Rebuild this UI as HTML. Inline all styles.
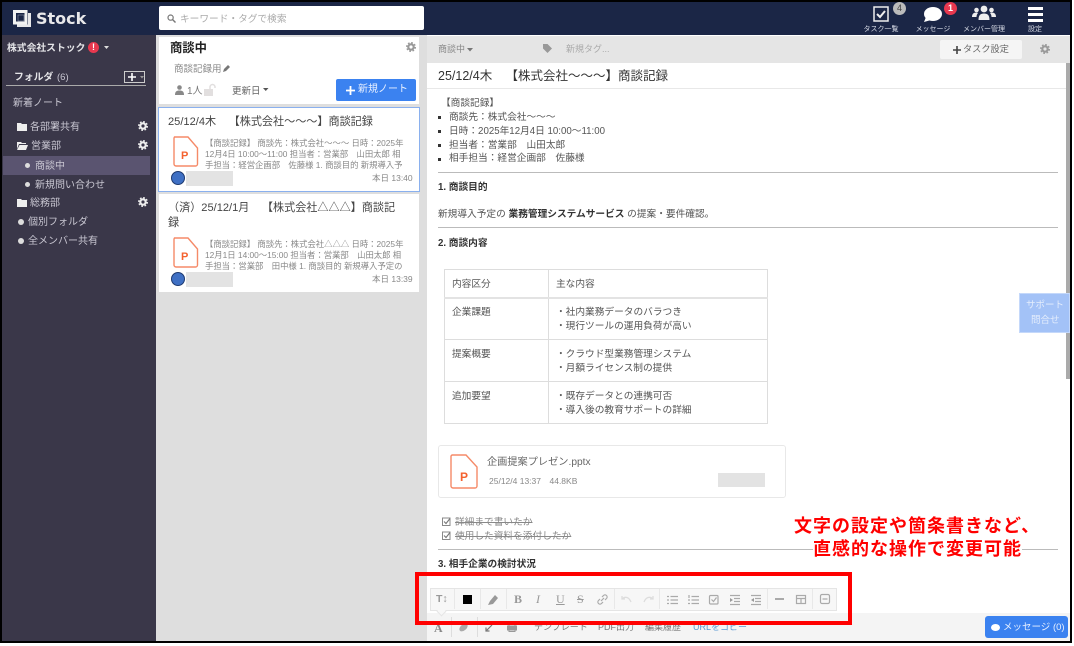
<!DOCTYPE html>
<html lang="ja"><head><meta charset="utf-8">
<style>
html,body{margin:0;padding:0;background:#fff}
body{width:1074px;height:646px;overflow:hidden;position:relative;font-family:"Liberation Sans","Noto Sans CJK JP",sans-serif;color:#444;filter:blur(.3px)}
.a,.t{position:absolute}
.t{white-space:nowrap;line-height:1.2;margin-top:2px}
svg{position:absolute;overflow:visible}
.s{color:#c9c7d2;font-size:10px}
.hl{position:absolute;left:438px;width:620px;height:1px;background:#bbb}
.hi{color:#d5d9e4;font-size:7px;transform:translateX(-50%)}
.pv{color:#888;font-size:8.35px}
.c{font-size:9.7px;color:#555}
.tb{stroke:#aaa;fill:none;stroke-width:1.2}
.gap{padding-left:7px}
</style></head><body>
<svg width="0" height="0" style="left:0;top:0"><defs><symbol id="g" viewBox="0 0 12 12"><circle cx="6" cy="6" r="3.2" fill="none" stroke="currentColor" stroke-width="2.600"/><circle cx="6" cy="6" r="5" fill="none" stroke="currentColor" stroke-width="2" stroke-dasharray="2 1.930"/></symbol></defs></svg>
<div class="a" style="left:0;top:0;width:1072px;height:643px;background:#000"></div>
<div class="a" style="left:2px;top:2px;width:1068px;height:639px;background:#fff;overflow:hidden"></div>
<!-- header -->
<div class="a" style="left:2px;top:2px;width:1068px;height:33px;background:#1b2646"></div>
<!-- sidebar -->
<div class="a" style="left:2px;top:35px;width:154px;height:606px;background:#3a3749"></div>
<!-- list col -->
<div class="a" style="left:156px;top:35px;width:271px;height:606px;background:#dedede"></div>
<!-- top bar right -->
<div class="a" style="left:427px;top:36px;width:643px;height:27px;background:#e5e5e5"></div>
<div class="a" style="left:427px;top:88px;width:639px;height:1px;background:#e8e8e8"></div>
<div class="a" style="left:1066px;top:63px;width:4px;height:316px;background:#aaa"></div>

<!-- logo -->
<svg style="left:13px;top:10px" width="18" height="17"><path d="M15 3h3v14H4v-2.500h11z" fill="#e8e8ea"/><rect x="1.500" y="1.500" width="11.500" height="11.500" fill="#1b2646" stroke="#f2f2f2" stroke-width="3"/><rect x="5" y="5" width="6" height="6" fill="none" stroke="#8d93a6" stroke-width=".6"/></svg>
<div class="t" style="left:36px;top:7px;font-size:16px;font-weight:bold;font-family:'DejaVu Sans',sans-serif;color:#e8e8ea">Stock</div>
<!-- search -->
<div class="a" style="left:159px;top:6px;width:265px;height:24px;background:#fff;border-radius:2px"></div>
<svg style="left:167px;top:14px" width="9" height="9"><circle cx="3.600" cy="3.600" r="2.600" fill="none" stroke="#777" stroke-width="1.200"/><path d="M5.500 5.500L8.500 8.500" stroke="#777" stroke-width="1.400"/></svg>
<div class="t" style="left:180px;top:12px;font-size:9.700px;color:#aaa">キーワード・タグで検索</div>

<!-- header icons -->
<svg style="left:873px;top:6px" width="16" height="16"><rect x="1" y="1" width="14" height="14" fill="none" stroke="#eee" stroke-width="1.500"/><path d="M4 8l3 3 5-6" fill="none" stroke="#eee" stroke-width="2"/></svg>
<div class="a" style="left:893px;top:2px;width:13px;height:13px;border-radius:50%;background:#bbb;color:#444;font-size:9px;text-align:center;line-height:13px">4</div>
<div class="t hi" style="left:881px;top:24px">タスク一覧</div>
<svg style="left:923px;top:6px" width="20" height="17"><ellipse cx="10" cy="8" rx="9" ry="7" fill="#fff"/><path d="M3 11L1 16 8 14z" fill="#fff"/></svg>
<div class="a" style="left:944px;top:2px;width:13px;height:13px;border-radius:50%;background:#e8384f;color:#fff;font-size:9px;font-weight:bold;text-align:center;line-height:13px">1</div>
<div class="t hi" style="left:933px;top:24px">メッセージ</div>
<svg style="left:972px;top:5px" width="24" height="16" fill="#eee"><circle cx="12" cy="4" r="3.400"/><path d="M6.500 15c0-5 2-6.500 5.500-6.500s5.500 1.500 5.500 6.500z"/><circle cx="4.500" cy="5" r="2.300"/><path d="M0 12c0-3 1.500-4.500 4.500-4.500 1 0 1.500.5 1.500.5-1 1-1.500 2.500-1.500 4z"/><circle cx="19.500" cy="5" r="2.300"/><path d="M24 12c0-3-1.500-4.500-4.500-4.500-1 0-1.500.5-1.500.5 1 1 1.500 2.500 1.500 4z"/></svg>
<div class="t hi" style="left:984px;top:24px">メンバー管理</div>
<div class="a" style="left:1028px;top:7px;width:15px;height:2.500px;background:#fff"></div>
<div class="a" style="left:1028px;top:13px;width:15px;height:2.500px;background:#fff"></div>
<div class="a" style="left:1028px;top:19px;width:15px;height:2.500px;background:#fff"></div>
<div class="t hi" style="left:1035px;top:24px">設定</div>

<!-- sidebar content -->
<div class="t" style="left:7px;top:41px;font-size:9.800px;font-weight:bold;color:#e5e5e8">株式会社ストック</div>
<div class="a" style="left:88px;top:42px;width:11px;height:11px;border-radius:50%;background:#e8384f;color:#fff;font-size:9px;font-weight:bold;text-align:center;line-height:11px">!</div>
<svg style="left:104px;top:46px" width="6" height="4"><path d="M0 0h5L2.500 3z" fill="#ddd"/></svg>
<div class="t" style="left:14px;top:70px;font-size:9.800px;font-weight:bold;color:#e5e5e8">フォルダ</div>
<div class="t" style="left:57px;top:70px;font-size:9.500px;color:#c9c7d2">(6)</div>
<div class="a" style="left:124px;top:71px;width:21px;height:12px;border:1px solid #ccc;box-sizing:border-box"></div>
<svg style="left:128px;top:73px" width="8" height="8"><path d="M4 0v8M0 4h8" stroke="#fff" stroke-width="1.600"/></svg>
<svg style="left:140px;top:76px" width="4" height="3"><path d="M0 0h4L2 2.500z" fill="#999"/></svg>
<div class="a" style="left:6px;top:85px;width:140px;height:1px;background:#aaa"></div>
<div class="t s" style="left:13px;top:96px">新着ノート</div>

<svg style="left:17px;top:122px" width="10" height="9"><path d="M0 1h4l1 1h5v7H0z" fill="#eee"/></svg>
<div class="t s" style="left:30px;top:120px">各部署共有</div>
<svg style="left:138px;top:121px;color:#eee" width="10" height="10"><use href="#g"/></svg>
<svg style="left:17px;top:141px" width="11" height="9"><path d="M0 1h4l1 1h4v1H2L0 8zM2.500 4H11L9 9H0z" fill="#eee"/></svg>
<div class="t s" style="left:31px;top:139px">営業部</div>
<svg style="left:138px;top:140px;color:#eee" width="10" height="10"><use href="#g"/></svg>
<div class="a" style="left:3px;top:156px;width:147px;height:19px;background:#5a5470"></div>
<div class="a" style="left:25px;top:163px;width:5px;height:5px;border-radius:50%;background:#ddd"></div>
<div class="t s" style="left:35px;top:159px">商談中</div>
<div class="a" style="left:25px;top:182px;width:5px;height:5px;border-radius:50%;background:#ddd"></div>
<div class="t s" style="left:35px;top:178px">新規問い合わせ</div>
<svg style="left:17px;top:198px" width="10" height="9"><path d="M0 1h4l1 1h5v7H0z" fill="#eee"/></svg>
<div class="t s" style="left:30px;top:196px">総務部</div>
<svg style="left:138px;top:197px;color:#eee" width="10" height="10"><use href="#g"/></svg>
<div class="a" style="left:18px;top:219px;width:6px;height:6px;border-radius:50%;background:#ddd"></div>
<div class="t s" style="left:28px;top:215px">個別フォルダ</div>
<div class="a" style="left:18px;top:238px;width:6px;height:6px;border-radius:50%;background:#ddd"></div>
<div class="t s" style="left:28px;top:234px">全メンバー共有</div>

<!-- list header -->
<div class="a" style="left:159px;top:37px;width:260px;height:67px;background:#fff"></div>
<div class="t" style="left:170px;top:39px;font-size:12.300px;font-weight:bold;color:#222">商談中</div>
<svg style="left:406px;top:42px;color:#999" width="10" height="10"><use href="#g"/></svg>
<div class="t" style="left:174px;top:62px;font-size:9.500px;color:#888">商談記録用</div>
<svg style="left:223px;top:64px" width="8" height="8"><path d="M0 8l1-3 4-4 2 2-4 4z" fill="#777"/></svg>
<svg style="left:175px;top:85px" width="9" height="10" fill="#888"><circle cx="4.500" cy="2.500" r="2.300"/><path d="M0 10c0-3.500 1.500-4.500 4.500-4.500S9 6.500 9 10z"/></svg>
<div class="t" style="left:187px;top:84px;font-size:10px;color:#777">1人</div>
<svg style="left:204px;top:84px" width="13" height="12"><rect x="0" y="5" width="9" height="7" fill="#e2dfdf"/><path d="M6 5V3a2.500 2.500 0 0 1 5 0v1" fill="none" stroke="#e2dfdf" stroke-width="1.500"/></svg>
<div class="t" style="left:232px;top:84px;font-size:9.500px;color:#666">更新日</div>
<svg style="left:263px;top:88px" width="6" height="4"><path d="M0 0h5.500L2.750 3z" fill="#555"/></svg>
<div class="a" style="left:336px;top:79px;width:80px;height:22px;background:#3b82f0;border-radius:2px"></div>
<svg style="left:346px;top:86px" width="9" height="9"><path d="M4.500 0v9M0 4.500h9" stroke="#fff" stroke-width="1.800"/></svg>
<div class="t" style="left:358px;top:82px;font-size:10px;color:#e8f0ff">新規ノート</div>

<!-- card 1 -->
<div class="a" style="left:158px;top:107px;width:262px;height:85px;background:#fff;border:1.500px solid #8ab0ee;box-sizing:border-box"></div>
<div class="t" style="left:168px;top:114px;font-size:11.100px;color:#444">25/12/4木　<span class="gap">【株式会社～～～】商談記録</span></div>
<svg style="left:173px;top:136px" width="26" height="31"><path d="M1.500 1h13.500l9.500 11v16a2 2 0 0 1-2 2H3a2 2 0 0 1-2-2V2z" fill="#fff" stroke="#f58a68" stroke-width="1.400"/></svg>
<div class="t" style="left:181px;top:148px;font-size:11px;font-weight:bold;color:#f4622f">P</div>
<div class="t pv" style="left:205px;top:135.500px">【商談記録】 商談先：株式会社～～～ 日時：2025年</div>
<div class="t pv" style="left:205px;top:146.500px">12月4日 10:00～11:00 担当者：営業部　山田太郎 相</div>
<div class="t pv" style="left:205px;top:157.500px">手担当：経営企画部　佐藤様 1. 商談目的 新規導入予</div>
<div class="a" style="left:171px;top:171px;width:14px;height:14px;border-radius:50%;background:#3f70c4;border:1px solid #1e3a70;box-sizing:border-box"></div>
<div class="a" style="left:186px;top:171px;width:47px;height:15px;background:#e3e3e3"></div>
<div class="t" style="left:372px;top:171px;font-size:8.500px;color:#888">本日 13:40</div>

<!-- card 2 -->
<div class="a" style="left:159px;top:194px;width:260px;height:98px;background:#fff"></div>
<div class="t" style="left:168px;top:200px;font-size:11.100px;color:#444">（済）25/12/1月　<span class="gap">【株式会社△△△】商談記</span></div>
<div class="t" style="left:168px;top:215px;font-size:11.100px;color:#444">録</div>
<svg style="left:173px;top:237px" width="26" height="31"><path d="M1.500 1h13.500l9.500 11v16a2 2 0 0 1-2 2H3a2 2 0 0 1-2-2V2z" fill="#fff" stroke="#f58a68" stroke-width="1.400"/></svg>
<div class="t" style="left:181px;top:249px;font-size:11px;font-weight:bold;color:#f4622f">P</div>
<div class="t pv" style="left:205px;top:236.500px">【商談記録】 商談先：株式会社△△△ 日時：2025年</div>
<div class="t pv" style="left:205px;top:247.500px">12月1日 14:00～15:00 担当者：営業部　山田太郎 相</div>
<div class="t pv" style="left:205px;top:258.500px">手担当：営業部　田中様 1. 商談目的 新規導入予定の</div>
<div class="a" style="left:171px;top:272px;width:14px;height:14px;border-radius:50%;background:#3f70c4;border:1px solid #1e3a70;box-sizing:border-box"></div>
<div class="a" style="left:186px;top:272px;width:47px;height:15px;background:#e3e3e3"></div>
<div class="t" style="left:372px;top:272px;font-size:8.500px;color:#888">本日 13:39</div>

<!-- right topbar -->
<div class="t" style="left:438px;top:42px;font-size:9px;color:#888">商談中</div>
<svg style="left:467px;top:48px" width="6" height="4"><path d="M0 0h6L3 3.500z" fill="#777"/></svg>
<svg style="left:543px;top:44px" width="9" height="9"><path d="M0 0h4.500L9 4.500 4.500 9 0 4.500z" fill="#999"/></svg>
<div class="t" style="left:566px;top:42px;font-size:9px;color:#aaa">新規タグ...</div>
<div class="a" style="left:940px;top:40px;width:82px;height:19px;background:#f5f5f5;border-radius:2px"></div>
<svg style="left:953px;top:46px" width="8" height="8"><path d="M4 0v8M0 4h8" stroke="#444" stroke-width="1.600"/></svg>
<div class="t" style="left:963px;top:42px;font-size:9.200px;color:#666">タスク設定</div>
<svg style="left:1040px;top:44px;color:#999" width="10" height="10"><use href="#g"/></svg>

<!-- note -->
<div class="t" style="left:438px;top:67px;font-size:12.500px;color:#333">25/12/4木　<span class="gap">【株式会社～～～】商談記録</span></div>
<div class="t c" style="left:441px;top:96px">【商談記録】</div>
<div class="a" style="left:438px;top:116px;width:3px;height:3px;background:#333"></div><div class="t c" style="left:449px;top:110px">商談先：株式会社～～～</div>
<div class="a" style="left:438px;top:130px;width:3px;height:3px;background:#333"></div><div class="t c" style="left:449px;top:124px">日時：2025年12月4日 10:00～11:00</div>
<div class="a" style="left:438px;top:144px;width:3px;height:3px;background:#333"></div><div class="t c" style="left:449px;top:138px">担当者：営業部　山田太郎</div>
<div class="a" style="left:438px;top:158px;width:3px;height:3px;background:#333"></div><div class="t c" style="left:449px;top:151px">相手担当：経営企画部　佐藤様</div>
<div class="hl" style="top:172px"></div>
<div class="t c" style="left:438px;top:180px;font-weight:bold;color:#333">1. 商談目的</div>
<div class="t c" style="left:438px;top:207px">新規導入予定の <b style="color:#333">業務管理システムサービス</b> の提案・要件確認。</div>
<div class="hl" style="top:227px"></div>
<div class="t c" style="left:438px;top:236px;font-weight:bold;color:#333">2. 商談内容</div>

<!-- table -->
<div class="a" style="left:444px;top:269px;width:324px;height:155px;border:1px solid #ddd;box-sizing:border-box"></div>
<div class="a" style="left:548px;top:269px;width:1px;height:155px;background:#ddd"></div>
<div class="a" style="left:444px;top:297px;width:324px;height:2px;background:#e3e3e3"></div>
<div class="a" style="left:444px;top:339px;width:324px;height:1px;background:#ddd"></div>
<div class="a" style="left:444px;top:381px;width:324px;height:1px;background:#ddd"></div>
<div class="t c" style="left:452px;top:277px">内容区分</div><div class="t c" style="left:556px;top:277px">主な内容</div>
<div class="t c" style="left:452px;top:305px">企業課題</div><div class="t c" style="left:556px;top:305px">・社内業務データのバラつき</div><div class="t c" style="left:556px;top:319px">・現行ツールの運用負荷が高い</div>
<div class="t c" style="left:452px;top:347px">提案概要</div><div class="t c" style="left:556px;top:347px">・クラウド型業務管理システム</div><div class="t c" style="left:556px;top:361px">・月額ライセンス制の提供</div>
<div class="t c" style="left:452px;top:389px">追加要望</div><div class="t c" style="left:556px;top:389px">・既存データとの連携可否</div><div class="t c" style="left:556px;top:403px">・導入後の教育サポートの詳細</div>

<!-- attachment -->
<div class="a" style="left:438px;top:445px;width:348px;height:53px;border:1px solid #e8e8e8;border-radius:3px;box-sizing:border-box"></div>
<svg style="left:450px;top:454px" width="28" height="35"><path d="M2 1h14l11 12v19a2 2 0 0 1-2 2H3a2 2 0 0 1-2-2V2z" fill="#fff" stroke="#f58a68" stroke-width="1.400"/></svg>
<div class="t" style="left:460px;top:468px;font-size:12px;font-weight:bold;color:#f4622f">P</div>
<div class="t" style="left:487px;top:455px;font-size:10.200px;color:#666">企画提案プレゼン.pptx</div>
<div class="t" style="left:489px;top:474px;font-size:8.500px;color:#888">25/12/4 13:37　44.8KB</div>
<div class="a" style="left:718px;top:473px;width:47px;height:14px;background:#e3e3e3"></div>

<!-- checks -->
<svg style="left:442px;top:517px" width="9" height="9"><rect x=".5" y="1" width="7.500" height="7.500" fill="none" stroke="#888"/><path d="M2 4.500l2 2 4-5" fill="none" stroke="#777" stroke-width="1.100"/></svg>
<div class="t" style="left:455px;top:515px;font-size:9.700px;color:#888;text-decoration:line-through">詳細まで書いたか</div>
<svg style="left:442px;top:531px" width="9" height="9"><rect x=".5" y="1" width="7.500" height="7.500" fill="none" stroke="#888"/><path d="M2 4.500l2 2 4-5" fill="none" stroke="#777" stroke-width="1.100"/></svg>
<div class="t" style="left:455px;top:529px;font-size:9.700px;color:#888;text-decoration:line-through">使用した資料を添付したか</div>
<div class="hl" style="top:549px"></div>
<div class="t c" style="left:438px;top:557px;font-weight:bold;color:#333">3. 相手企業の検討状況</div>

<!-- support -->
<div class="a" style="left:1019px;top:293px;width:51px;height:40px;background:#a3c2f7;border:1px solid #c4d8fa;box-sizing:border-box"></div>
<div class="t" style="left:1026px;top:298px;font-size:9.500px;color:#e4edfc">サポート</div>
<div class="t" style="left:1031px;top:313px;font-size:9.500px;color:#e4edfc">問合せ</div>

<!-- bottom bar -->
<div class="a" style="left:427px;top:613px;width:643px;height:28px;background:#f4f4f4"></div>
<div class="t" style="left:434px;top:619px;font-size:12px;font-weight:bold;font-family:'Liberation Serif',serif;color:#888">A</div>
<div class="a" style="left:451px;top:617px;width:1px;height:20px;background:#ddd"></div>
<div class="a" style="left:477px;top:617px;width:1px;height:20px;background:#ddd"></div>
<svg style="left:459px;top:623px" width="9" height="9"><ellipse cx="4.500" cy="4.500" rx="4.800" ry="3" transform="rotate(-40 4.500 4.500)" fill="#aaa"/></svg>
<svg style="left:486px;top:624px" width="7" height="7"><path d="M0 7L6 1M0 3.500V7h3.500" fill="none" stroke="#777" stroke-width="1.200"/></svg>
<svg style="left:507px;top:623px" width="10" height="9"><rect x="0" y="2.500" width="10" height="5" fill="#999"/><rect x="2" y=".5" width="6" height="8" fill="none" stroke="#999"/></svg>
<div class="t" style="left:534px;top:620px;font-size:9px;color:#777">テンプレート</div>
<div class="t" style="left:598px;top:620px;font-size:9px;color:#777">PDF出力</div>
<div class="t" style="left:645px;top:620px;font-size:9px;color:#777">編集履歴</div>
<div class="t" style="left:693px;top:620px;font-size:9px;color:#5b9bd5">URLをコピー</div>
<div class="a" style="left:985px;top:616px;width:83px;height:22px;background:#3b82f0;border-radius:3px"></div>
<svg style="left:991px;top:624px" width="9" height="8"><ellipse cx="4.500" cy="3.500" rx="4.500" ry="3.500" fill="#fff"/></svg>
<div class="t" style="left:1003px;top:620px;font-size:9.500px;color:#e8f0ff">メッセージ (0)</div>

<!-- toolbar -->
<div class="a" style="left:427px;top:577px;width:420px;height:36px;background:#fff"></div>
<div class="a" style="left:430px;top:588px;width:407px;height:23px;background:#f7f7f7;border:1px solid #e5e5e5;box-sizing:border-box"></div>
<div class="a" style="left:438px;top:608px;width:6px;height:6px;background:#f7f7f7;border-right:1px solid #e5e5e5;border-bottom:1px solid #e5e5e5;transform:rotate(45deg)"></div>
<div class="t" style="left:436px;top:591px;font-size:10.500px;font-weight:bold;color:#999">T↕</div>
<div class="a" style="left:463px;top:595px;width:9px;height:9px;background:#000"></div>
<svg style="left:488px;top:594px" width="11" height="11"><path d="M0 11l2-4 5-6 3 3-5 6z" fill="#999"/></svg>
<div class="t" style="left:514px;top:590px;font-size:12px;font-weight:bold;font-family:'Liberation Serif',serif;color:#999">B</div>
<div class="t" style="left:536px;top:590px;font-size:12px;font-style:italic;font-family:'Liberation Serif',serif;color:#999">I</div>
<div class="t" style="left:556px;top:590px;font-size:12px;font-family:'Liberation Serif',serif;color:#999;text-decoration:underline">U</div>
<div class="t" style="left:577px;top:590px;font-size:12px;font-family:'Liberation Serif',serif;color:#999;text-decoration:line-through">S</div>
<svg style="left:597px;top:594px" width="11" height="11"><path class="tb" d="M4 7l3-3M3 5L1.500 6.500a2.100 2.100 0 0 0 3 3L6 8M5 3l1.500-1.500a2.100 2.100 0 0 1 3 3L8 6"/></svg>
<svg style="left:621px;top:595px" width="11" height="9"><path d="M1 4c3-3 7-2 9 3M1 1v3h3" fill="none" stroke="#ddd" stroke-width="1.300"/></svg>
<svg style="left:643px;top:595px" width="11" height="9"><path d="M10 4C7 1 3 2 1 7M10 1v3H7" fill="none" stroke="#ddd" stroke-width="1.300"/></svg>
<svg style="left:667px;top:595px" width="11" height="10"><path class="tb" d="M3.500 1.500H11M3.500 5H11M3.500 8.500H11M0 1.500h2M0 5h2M0 8.500h2"/></svg>
<svg style="left:688px;top:595px" width="11" height="10"><path class="tb" d="M3.500 1.500H11M3.500 5H11M3.500 8.500H11M1 0v3M0 5h2M0 8.500h2"/></svg>
<svg style="left:709px;top:595px" width="10" height="10"><rect class="tb" x=".5" y=".5" width="8.500" height="8.500" rx="1"/><path class="tb" d="M2.500 4.500l2 2 3-4"/></svg>
<svg style="left:730px;top:595px" width="10" height="10"><path class="tb" d="M0 .5h10M4 3.500h6M4 6.500h6M0 9.500h10"/><path d="M0 3l3 2-3 2z" fill="#999"/></svg>
<svg style="left:751px;top:595px" width="10" height="10"><path class="tb" d="M0 .5h10M4 3.500h6M4 6.500h6M0 9.500h10"/><path d="M3 3L0 5l3 2z" fill="#999"/></svg>
<div class="a" style="left:775px;top:598px;width:9px;height:2px;background:#aaa"></div>
<svg style="left:796px;top:595px" width="10" height="9"><rect class="tb" x=".5" y=".5" width="9" height="8"/><path class="tb" d="M.5 3.500h9M5 3.500v5"/></svg>
<svg style="left:820px;top:594px" width="10" height="10"><rect class="tb" x=".5" y=".5" width="9" height="9" rx="1.500"/><path class="tb" d="M2.500 5h5"/></svg>
<div class="a" style="left:454px;top:589px;width:1px;height:20px;background:#e8e8e8"></div>
<div class="a" style="left:480px;top:589px;width:1px;height:20px;background:#e8e8e8"></div>
<div class="a" style="left:506px;top:589px;width:1px;height:20px;background:#e8e8e8"></div>
<div class="a" style="left:614px;top:589px;width:1px;height:20px;background:#e8e8e8"></div>
<div class="a" style="left:659px;top:589px;width:1px;height:20px;background:#e8e8e8"></div>
<div class="a" style="left:767px;top:589px;width:1px;height:20px;background:#e8e8e8"></div>
<div class="a" style="left:812px;top:589px;width:1px;height:20px;background:#e8e8e8"></div>

<!-- red annotation -->
<div class="a" style="left:415px;top:571.500px;width:437px;height:53px;border:4px solid #f00;box-sizing:border-box"></div>
<div class="t" style="left:794px;top:514px;font-size:18px;font-weight:bold;color:#f00;background:#fff;letter-spacing:1px">文字の設定や箇条書きなど、</div>
<div class="t" style="left:813px;top:537px;font-size:18px;font-weight:bold;color:#f00;background:#fff;letter-spacing:1px">直感的な操作で変更可能</div>
</body></html>
